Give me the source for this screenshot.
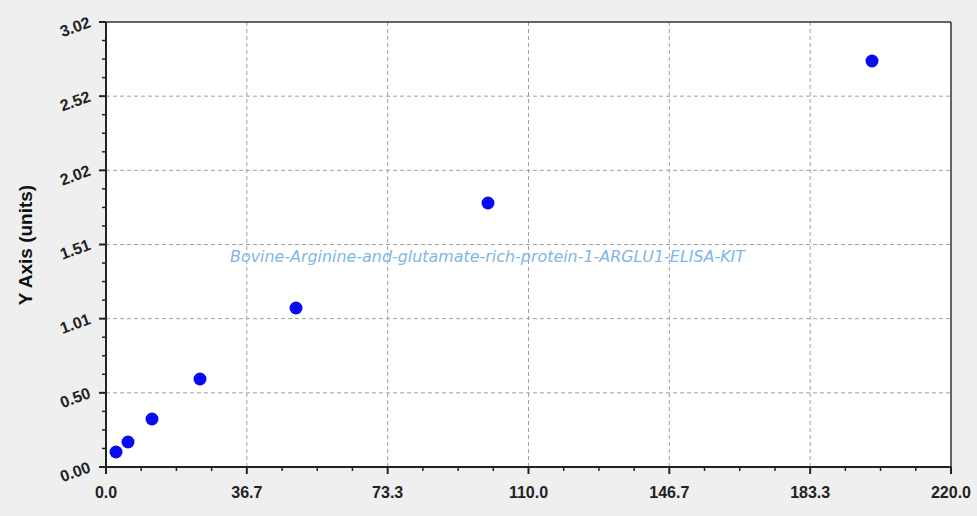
export default function App() {
  const L = 106, R = 951, T = 22, B = 467;
  const xs = [0, 1, 2, 3, 4, 5, 6].map(i => L + (i * (R - L)) / 6);
  const ys = [0, 1, 2, 3, 4, 5, 6].map(i => B - (i * (B - T)) / 6);
  const xl = ["0.0", "36.7", "73.3", "110.0", "146.7", "183.3", "220.0"];
  const yl = ["0.00", "0.50", "1.01", "1.51", "2.02", "2.52", "3.02"];
  const pts = [[116, 452], [128, 442], [152, 419], [200, 379], [296, 308], [488, 203], [872, 61]];
  const minorX: number[] = [];
  for (let i = 0; i < 6; i++) for (let j = 1; j < 4; j++) minorX.push(xs[i] + (j * (xs[i + 1] - xs[i])) / 4);
  const minorY: number[] = [];
  for (let i = 0; i < 6; i++) for (let j = 1; j < 4; j++) minorY.push(ys[i] + (j * (ys[i + 1] - ys[i])) / 4);
  return (
    <div className="w-[977px] h-[516px] bg-[#efefef]" style={{ fontFamily: "'Liberation Sans', Arial, sans-serif" }}>
      <svg width="977" height="516" className="block">
        <rect x={L} y={T} width={R - L} height={B - T} fill="#fff" />
        {xs.slice(1, 6).map((x, i) => (
          <line key={"gx" + i} x1={x} x2={x} y1={T} y2={B} stroke="#a0a0a0" strokeDasharray="4 3" />
        ))}
        {ys.slice(1, 6).map((y, i) => (
          <line key={"gy" + i} x1={L} x2={R} y1={y} y2={y} stroke="#a0a0a0" strokeDasharray="4 3" />
        ))}
        <line x1={L} x2={R} y1={T} y2={T} stroke="#333" strokeWidth="1.5" />
        <line x1={R} x2={R} y1={T} y2={B} stroke="#333" strokeWidth="1.5" />
        <line x1={L} x2={L} y1={T} y2={B} stroke="#222" strokeWidth="2" />
        <line x1={L} x2={R} y1={B} y2={B} stroke="#222" strokeWidth="2" />
        {xs.map((x, i) => <line key={"tx" + i} x1={x} x2={x} y1={B} y2={B + 7} stroke="#222" strokeWidth="2" />)}
        {minorX.map((x, i) => <line key={"mx" + i} x1={x} x2={x} y1={B} y2={B + 4} stroke="#222" strokeWidth="1.5" />)}
        {ys.map((y, i) => <line key={"ty" + i} x1={L - 7} x2={L} y1={y} y2={y} stroke="#222" strokeWidth="2" />)}
        {minorY.map((y, i) => <line key={"my" + i} x1={L - 4} x2={L} y1={y} y2={y} stroke="#222" strokeWidth="1.5" />)}
        {xs.map((x, i) => (
          <text key={"xl" + i} x={x} y={498} textAnchor="middle" fontSize="16" fontWeight="bold" fill="#222">{xl[i]}</text>
        ))}
        {ys.map((y, i) => (
          <text key={"yl" + i} x={90} y={y + 5} textAnchor="end" fontSize="16" fontWeight="bold" fill="#222" transform={`rotate(-20 ${90} ${y})`}>{yl[i]}</text>
        ))}
        <text x={32} y={245} textAnchor="middle" fontSize="19" fontWeight="bold" fill="#111" transform="rotate(-90 32 245)">Y Axis (units)</text>
        <text x={230} y={262} textLength={515} lengthAdjust="spacingAndGlyphs" fontSize="15" fontStyle="italic" fill="#7fb6e6" style={{ fontFamily: "'DejaVu Sans', sans-serif" }}>Bovine-Arginine-and-glutamate-rich-protein-1-ARGLU1-ELISA-KIT</text>
        {pts.map(([x, y], i) => <circle key={"p" + i} cx={x} cy={y} r="6.5" fill="#0a0af0" />)}
      </svg>
    </div>
  );
}
